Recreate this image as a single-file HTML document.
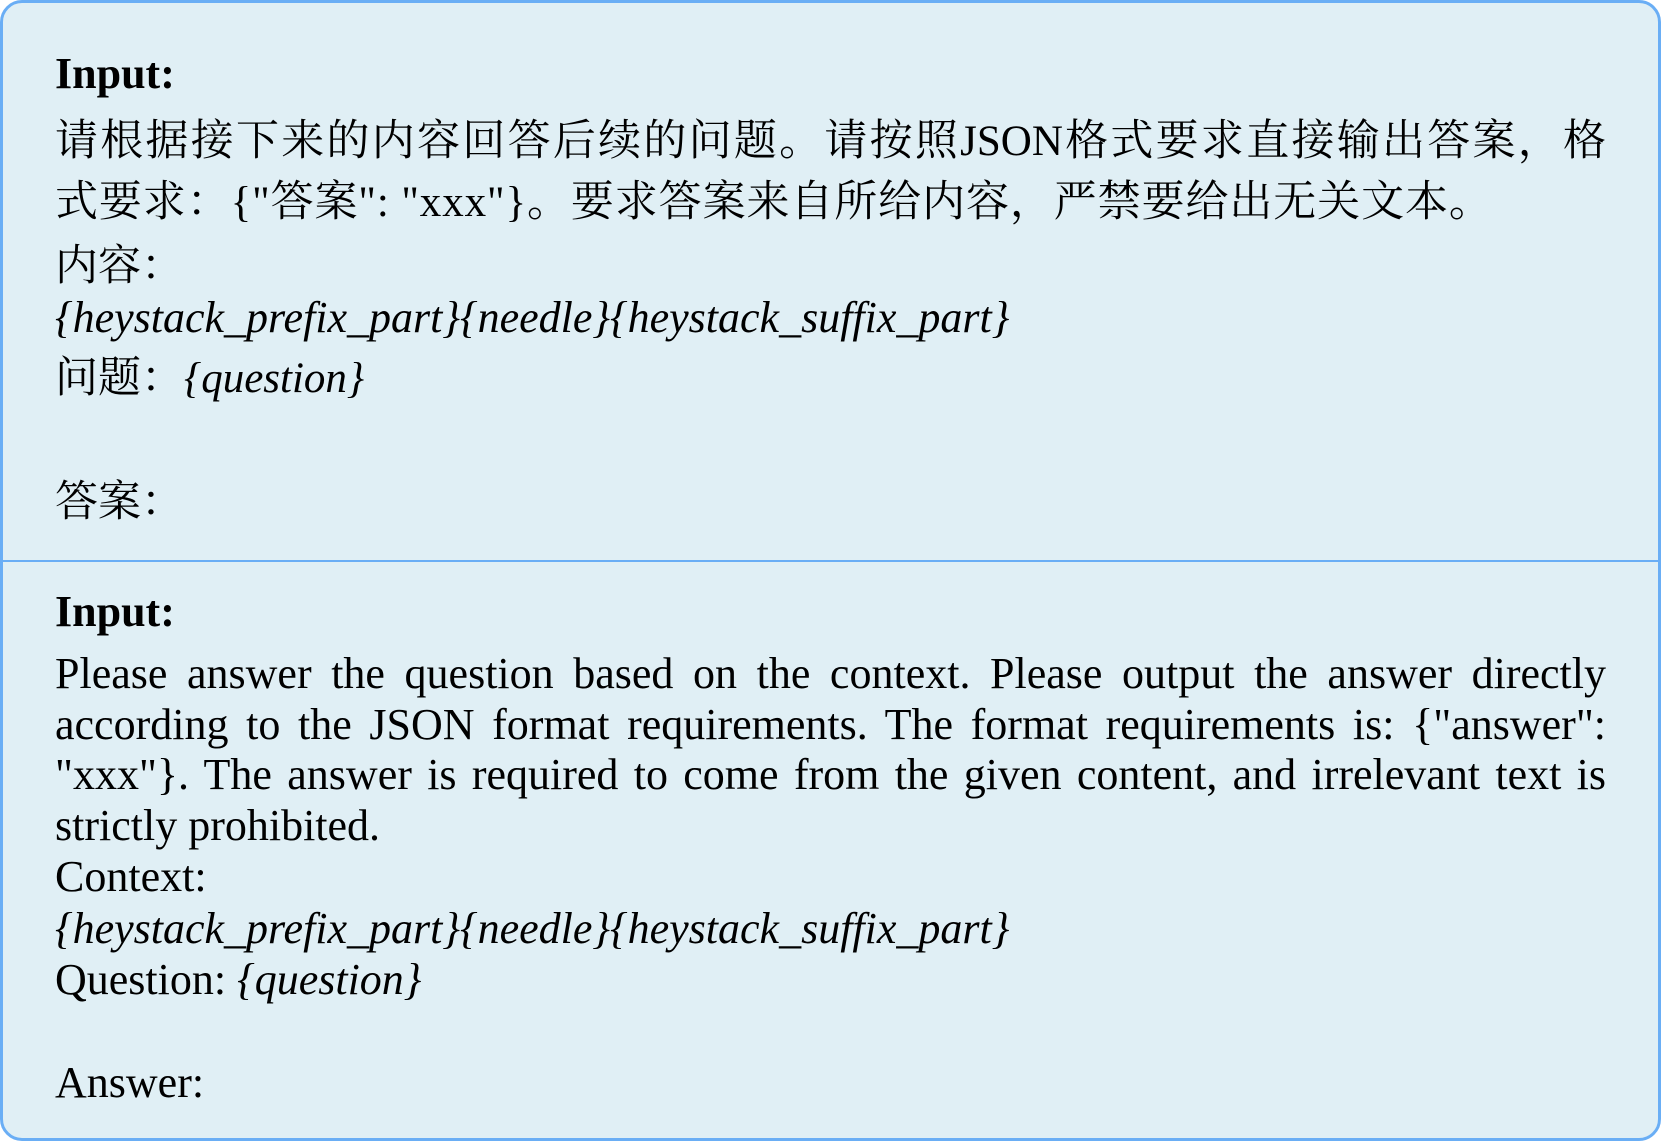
<!DOCTYPE html>
<html><head><meta charset="utf-8"><style>
html,body{margin:0;padding:0;background:#fff;}
body{width:1661px;height:1141px;position:relative;overflow:hidden;font-family:"Liberation Serif","Noto Serif CJK SC",serif;color:#000;}
.box{position:absolute;left:0px;top:0px;width:1655px;height:1135px;border:3px solid #6aaef5;border-radius:22px;background:#e0eff5;}
.div{position:absolute;left:1px;top:560px;width:1660px;height:2px;background:#6aaef5;}
.l{position:absolute;left:55px;width:1551px;line-height:50px;height:50px;white-space:nowrap;font-size:44px;}
.j{text-align:justify;text-align-last:justify;white-space:normal;}
.b{font-weight:bold;}
.cn{font-size:43px;}
i{font-style:italic;}
</style></head><body>
<div class="box"></div>
<div class="div"></div>
<div class="l b" style="top:49px">Input:</div>
<div class="l cn j" style="top:117px">请根据接下来的内容回答后续的问题。请按照JSON格式要求直接输出答案，格</div>
<div class="l cn" style="top:178px;letter-spacing:0.9px">式要求：{"答案": "xxx"}。要求答案来自所给内容，严禁要给出无关文本。</div>
<div class="l cn" style="top:242px">内容：</div>
<div class="l" style="top:293px"><i>{heystack_prefix_part}{needle}{heystack_suffix_part}</i></div>
<div class="l cn" style="top:354px">问题：<i>{question}</i></div>
<div class="l cn" style="top:478px">答案：</div>
<div class="l b" style="top:587px">Input:</div>
<div class="l j" style="top:649px">Please answer the question based on the context. Please output the answer directly</div>
<div class="l j" style="top:700px">according to the JSON format requirements. The format requirements is: {"answer":</div>
<div class="l j" style="top:750px">"xxx"}. The answer is required to come from the given content, and irrelevant text is</div>
<div class="l" style="top:801px">strictly prohibited.</div>
<div class="l" style="top:852px">Context:</div>
<div class="l" style="top:904px"><i>{heystack_prefix_part}{needle}{heystack_suffix_part}</i></div>
<div class="l" style="top:955px">Question: <i>{question}</i></div>
<div class="l" style="top:1058px">Answer:</div>
</body></html>
